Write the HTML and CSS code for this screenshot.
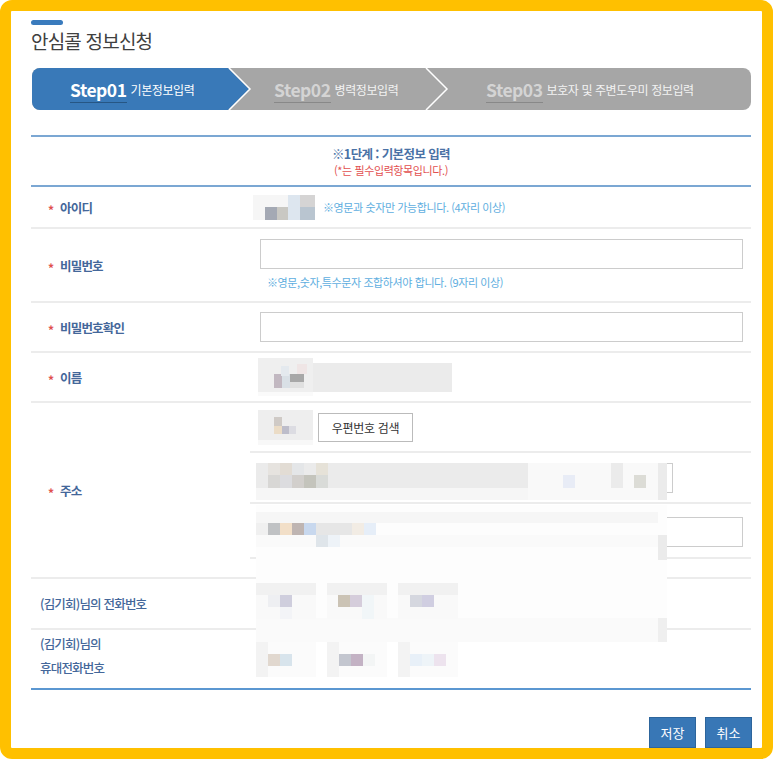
FILE: index.html
```html
<!DOCTYPE html>
<html lang="ko">
<head>
  <meta charset="UTF-8">
  <meta name="viewport" content="width=device-width, initial-scale=1.0">
  <title>안심콜 정보신청</title>
  <link rel="stylesheet" href="styles.css">
</head>
<body>
  <div class="frame">
    <div class="page-head">
      <span class="head-bar"></span>
      <h1 class="page-title">안심콜 정보신청</h1>
    </div>

    <div class="steps">
      <div class="step step-1 on">
        <span class="step-no">Step01</span><span class="step-name">기본정보입력</span>
      </div>
      <div class="step step-2">
        <span class="step-no">Step02</span><span class="step-name">병력정보입력</span>
      </div>
      <div class="step step-3">
        <span class="step-no">Step03</span><span class="step-name">보호자 및 주변도우미 정보입력</span>
      </div>
      <svg class="step-lines" width="719" height="42" viewBox="0 0 719 42">
        <polyline points="197,0 218,21 197,42"/>
        <polyline points="394,0 415,21 394,42"/>
      </svg>
    </div>

    <div class="form">
      <div class="form-head">
        <p class="form-step">※1단계 : 기본정보 입력</p>
        <p class="form-note">(*는 필수입력항목입니다.)</p>
      </div>

      <div class="row row-id">
        <div class="label"><span class="req">*</span>아이디</div>
        <div class="value">
          <div class="mz mz-id"></div>
          <span class="hint">※영문과 숫자만 가능합니다. (4자리 이상)</span>
        </div>
      </div>

      <div class="row row-pw">
        <div class="label"><span class="req">*</span>비밀번호</div>
        <div class="value value-stack">
          <input type="password" class="field">
          <span class="hint hint-under">※영문,숫자,특수문자 조합하셔야 합니다. (9자리 이상)</span>
        </div>
      </div>

      <div class="row row-pw2">
        <div class="label"><span class="req">*</span>비밀번호확인</div>
        <div class="value">
          <input type="password" class="field">
        </div>
      </div>

      <div class="row row-name">
        <div class="label"><span class="req">*</span>이름</div>
        <div class="value value-name">
          <div class="mz mz-name"></div>
          <span class="field-readonly"></span>
        </div>
      </div>

      <div class="row row-addr">
        <div class="label"><span class="req">*</span>주소</div>
        <div class="value addr">
          <div class="addr-line addr-zip">
            <div class="mz mz-zip"></div>
            <button type="button" class="btn-line">우편번호 검색</button>
          </div>
          <div class="addr-line addr-base">
            <input type="text" class="field field-mid">
            <div class="mz mz-addr"></div>
          </div>
          <div class="addr-line addr-detail">
            <input type="text" class="field">
          </div>
          <div class="addr-line addr-extra"></div>
        </div>
      </div>

      <div class="row row-tel">
        <div class="label label-plain">(김기회)님의 전화번호</div>
        <div class="value value-tel">
          <div class="mz mz-tel tel-1"></div>
          <div class="mz mz-tel tel-2"></div>
          <div class="mz mz-tel tel-3"></div>
        </div>
      </div>

      <div class="row row-mobile">
        <div class="label label-plain label-two">(김기회)님의<br>휴대전화번호</div>
        <div class="value value-tel">
          <div class="mz mz-tel mob-1"></div>
          <div class="mz mz-tel mob-2"></div>
          <div class="mz mz-tel mob-3"></div>
        </div>
      </div>

      <div class="blur-cover"></div>
    </div>

    <div class="actions">
      <button type="button" class="btn">저장</button>
      <button type="button" class="btn">취소</button>
    </div>
  </div>
</body>
</html>
```

FILE: styles.css
```css
* {
  margin: 0;
  padding: 0;
  box-sizing: border-box;
}

body {
  font-family: "Noto Sans CJK KR", "Noto Sans", sans-serif;
  background: #fff;
  color: #333;
}

.frame {
  width: 773px;
  height: 759px;
  border: 11px solid #ffc000;
  border-radius: 12px;
  background: #fff;
  padding: 0 11px 0 20px;
  overflow: hidden;
}

/* 제목 */
.page-head {
  padding-top: 9px;
}

.head-bar {
  display: block;
  width: 32px;
  height: 5px;
  border-radius: 3px;
  background: #3a7bbd;
}

.page-title {
  margin-top: 3px;
  font-size: 19px;
  line-height: 26px;
  font-weight: 400;
  letter-spacing: -0.8px;
  color: #404040;
}

/* 단계 표시 */
.steps {
  position: relative;
  display: flex;
  height: 42px;
  margin-top: 14px;
  margin-left: 1px;
  background: #a6a6a6;
  border-radius: 8px;
  overflow: hidden;
}

.step {
  display: flex;
  align-items: center;
  gap: 4px;
  height: 100%;
  color: #f2f2f2;
}

.step-1 {
  width: 217px;
  padding-left: 38px;
  background: #3979b8;
  clip-path: polygon(0 0, 196px 0, 217px 50%, 196px 100%, 0 100%);
  color: #fff;
}

.step-2 {
  width: 197px;
  padding-left: 25px;
}

.step-3 {
  flex: 1;
  padding-left: 40px;
}

.step-no {
  font-size: 17.5px;
  font-weight: 700;
  letter-spacing: -0.5px;
  line-height: 20px;
  color: #d4d4d4;
  border-bottom: 1px solid #888;
  padding-bottom: 2px;
  margin-top: 5px;
}

.on .step-no {
  color: #fff;
  border-bottom-color: #265684;
}

.step-name {
  font-size: 12px;
  letter-spacing: -0.4px;
  line-height: 16px;
  margin-top: 2px;
}

.step-lines {
  position: absolute;
  left: 0;
  top: 0;
}

.step-lines polyline {
  fill: none;
  stroke: #fff;
  stroke-width: 1.5;
}

/* 입력 폼 */
.form {
  position: relative;
  margin-top: 25px;
  border-top: 2px solid #7ba7d3;
  border-bottom: 2px solid #5b97d1;
}

.form-head {
  height: 50px;
  padding-top: 9px;
  text-align: center;
  border-bottom: 2px solid #7ba7d3;
}

.form-step {
  font-size: 12.5px;
  line-height: 16px;
  font-weight: 700;
  letter-spacing: -0.6px;
  color: #4a72a6;
}

.form-note {
  margin-top: 1px;
  font-size: 11px;
  line-height: 14px;
  letter-spacing: -0.4px;
  color: #e2504f;
}

.row {
  display: grid;
  grid-template-columns: 219px 1fr;
  border-bottom: 2px solid #ececec;
}

.row-id { height: 42px; }
.row-pw { height: 74px; }
.row-pw2 { height: 50px; }
.row-name { height: 50px; }
.row-addr { height: 176px; }
.row-tel { height: 51px; }
.row-mobile { height: 58px; border-bottom: none; }

.label {
  display: flex;
  align-items: center;
  padding-left: 9px;
  font-size: 12.5px;
  font-weight: 700;
  letter-spacing: -0.8px;
  color: #44679a;
}

.label-plain {
  font-weight: 500;
}

.label-two {
  line-height: 24px;
  padding-bottom: 6px;
}

.req {
  width: 12px;
  margin-left: 8px;
  color: #e0504f;
  font-size: 12px;
  position: relative;
  top: 2px;
}

.value {
  display: flex;
  align-items: center;
  padding-left: 10px;
}

.value-stack {
  flex-direction: column;
  align-items: flex-start;
  justify-content: flex-start;
  padding-top: 10px;
}

.hint {
  font-size: 11px;
  line-height: 15px;
  letter-spacing: -0.4px;
  color: #5eaee0;
}

.row-id .value {
  padding-left: 3px;
}

.row-id .hint {
  margin-left: 8px;
}

.hint-under {
  margin-top: 6px;
  padding-left: 7px;
}

.field {
  width: 483px;
  height: 30px;
  border: 1px solid #cccccc;
  background: #fff;
  outline: none;
}

.field-mid {
  width: 413px;
}

.value-name {
  padding-left: 8px;
}

.field-readonly {
  display: block;
  width: 139px;
  height: 29px;
  background: #ebebeb;
}

/* 주소 */
.addr {
  flex-direction: column;
  align-items: stretch;
  padding-left: 0;
}

.addr-line {
  position: relative;
  display: flex;
  align-items: center;
  padding-left: 10px;
  border-bottom: 2px solid #ececec;
}

.addr-zip {
  height: 50px;
  padding-left: 8px;
}

.addr-base { height: 51px; }

.addr-detail {
  height: 55px;
  align-items: flex-start;
  padding-top: 13px;
}

.addr-extra {
  height: 18px;
  border-bottom: none;
}

.btn-line {
  width: 95px;
  height: 29px;
  margin-left: 5px;
  border: 1px solid #bbbbbb;
  background: #fff;
  font-family: inherit;
  font-size: 12px;
  letter-spacing: -0.3px;
  color: #333;
}

/* 모자이크 처리 */
.mz {
  flex: none;
}

.mz-id {
  width: 62px;
  height: 25px;
  background:
    linear-gradient(#a4a9b4, #a4a9b4) 12px 12px / 12px 13px no-repeat,
    linear-gradient(#c9c8c3, #c9c8c3) 24px 12px / 11px 13px no-repeat,
    linear-gradient(#dde6ef, #dde6ef) 35px 0 / 12px 25px no-repeat,
    linear-gradient(#d5d4d4, #d5d4d4) 47px 0 / 15px 12px no-repeat,
    linear-gradient(#b9c5d0, #b9c5d0) 47px 12px / 15px 13px no-repeat,
    #f6f6f6;
}

.mz-name {
  width: 55px;
  height: 38px;
  background:
    linear-gradient(#e4e9ee, #e4e9ee) 23px 8px / 8px 10px no-repeat,
    linear-gradient(#efe5e5, #efe5e5) 39px 6px / 10px 10px no-repeat,
    linear-gradient(#c2b8c1, #c2b8c1) 16px 16px / 8px 14px no-repeat,
    linear-gradient(#d9e0e6, #d9e0e6) 24px 16px / 8px 14px no-repeat,
    linear-gradient(#a8a8a8, #a8a8a8) 31px 16px / 15px 8px no-repeat,
    linear-gradient(#e0e0e0, #e0e0e0) 31px 24px / 15px 6px no-repeat,
    linear-gradient(#fafafa, #fafafa) 0 34px / 100% 4px no-repeat,
    #efefef;
}

.mz-zip {
  width: 55px;
  height: 35px;
  background:
    linear-gradient(#cfcac6, #cfcac6) 16px 7px / 8px 9px no-repeat,
    linear-gradient(#ebdcc6, #ebdcc6) 16px 16px / 8px 8px no-repeat,
    linear-gradient(#bdbdca, #bdbdca) 24px 16px / 7px 8px no-repeat,
    linear-gradient(#dcdce2, #dcdce2) 31px 16px / 7px 8px no-repeat,
    linear-gradient(#f8f8f8, #f8f8f8) 0 30px / 100% 5px no-repeat,
    #eeeeee;
}

.mz-addr {
  position: absolute;
  left: 6px;
  top: 10px;
  width: 411px;
  height: 37px;
  background:
    linear-gradient(#e6e3df, #e6e3df) 12px 0 / 12px 12px no-repeat,
    linear-gradient(#e2dcd4, #e2dcd4) 24px 0 / 12px 12px no-repeat,
    linear-gradient(#e4e6e8, #e4e6e8) 36px 0 / 12px 12px no-repeat,
    linear-gradient(#e6e2d8, #e6e2d8) 60px 0 / 12px 12px no-repeat,
    linear-gradient(#d8d7d5, #d8d7d5) 12px 12px / 12px 13px no-repeat,
    linear-gradient(#dcdcdf, #dcdcdf) 24px 12px / 12px 13px no-repeat,
    linear-gradient(#d2cfcc, #d2cfcc) 36px 12px / 12px 13px no-repeat,
    linear-gradient(#c4c4bc, #c4c4bc) 48px 12px / 12px 13px no-repeat,
    linear-gradient(#d9dbd8, #d9dbd8) 60px 12px / 12px 13px no-repeat,
    linear-gradient(#f6f6f6, #f6f6f6) 0 25px / 272px 12px no-repeat,
    linear-gradient(#e8ecf6, #e8ecf6) 307px 12px / 12px 13px no-repeat,
    linear-gradient(#ebebeb, #ebebeb) 355px 0 / 12px 25px no-repeat,
    linear-gradient(#dcdcd6, #dcdcd6) 378px 12px / 12px 13px no-repeat,
    linear-gradient(#ebebeb, #ebebeb) 402px 0 / 9px 37px no-repeat,
    linear-gradient(#f9f9f9, #f9f9f9) 272px 0 / 139px 37px no-repeat,
    #ebebeb;
}

.blur-cover {
  position: absolute;
  left: 225px;
  top: 368px;
  width: 411px;
  height: 137px;
  z-index: 1;
  background:
    linear-gradient(#f6f6f6, #f6f6f6) 0 7px / 402px 11px no-repeat,
    linear-gradient(#f0f0f0, #f0f0f0) 0 18px / 12px 12px no-repeat,
    linear-gradient(#c0c2c4, #c0c2c4) 12px 18px / 12px 12px no-repeat,
    linear-gradient(#f2dfc8, #f2dfc8) 24px 18px / 12px 12px no-repeat,
    linear-gradient(#bfb5b2, #bfb5b2) 36px 18px / 12px 12px no-repeat,
    linear-gradient(#c8d8ee, #c8d8ee) 48px 18px / 12px 12px no-repeat,
    linear-gradient(#e6e6e6, #e6e6e6) 60px 18px / 36px 12px no-repeat,
    linear-gradient(#f2ece4, #f2ece4) 96px 18px / 12px 12px no-repeat,
    linear-gradient(#e6eef8, #e6eef8) 108px 18px / 12px 12px no-repeat,
    linear-gradient(#dfe5ea, #dfe5ea) 60px 30px / 12px 12px no-repeat,
    linear-gradient(#eef3f8, #eef3f8) 72px 30px / 12px 12px no-repeat,
    linear-gradient(#fafafa, #fafafa) 0 30px / 402px 12px no-repeat,
    linear-gradient(#ebebeb, #ebebeb) 402px 30px / 9px 25px no-repeat,
    linear-gradient(#efefef, #efefef) 402px 113px / 9px 24px no-repeat,
    linear-gradient(#fafafa, #fafafa) 0 113px / 402px 24px no-repeat,
    #fdfdfd;
}

.value-tel {
  align-items: flex-start;
  gap: 11px;
  padding-left: 6px;
}

.row-tel .value-tel { padding-top: 4px; }
.row-mobile .value-tel { padding-top: 12px; }

.mz-tel {
  position: relative;
  z-index: 2;
  width: 60px;
  height: 36px;
}

.tel-1 {
  background:
    linear-gradient(#eeeff2, #eeeff2) 12px 12px / 12px 12px no-repeat,
    linear-gradient(#cfcedd, #cfcedd) 24px 12px / 12px 12px no-repeat,
    linear-gradient(#f3f4f7, #f3f4f7) 24px 24px / 12px 12px no-repeat,
    linear-gradient(#f1f1f1, #f1f1f1) 0 0 / 100% 12px no-repeat,
    #f9f9f9;
}

.tel-2 {
  background:
    linear-gradient(#cbc3b5, #cbc3b5) 11px 12px / 12px 12px no-repeat,
    linear-gradient(#d5cddb, #d5cddb) 23px 12px / 12px 12px no-repeat,
    linear-gradient(#f1f6f8, #f1f6f8) 35px 12px / 12px 24px no-repeat,
    linear-gradient(#f1f1f1, #f1f1f1) 0 0 / 100% 12px no-repeat,
    #f9f9f9;
}

.tel-3 {
  background:
    linear-gradient(#d5d7df, #d5d7df) 12px 12px / 12px 12px no-repeat,
    linear-gradient(#d0cee1, #d0cee1) 24px 12px / 12px 12px no-repeat,
    linear-gradient(#f1f1f1, #f1f1f1) 0 0 / 100% 12px no-repeat,
    #f9f9f9;
}

.mob-1 {
  height: 35px;
  background:
    linear-gradient(#e1d8cf, #e1d8cf) 12px 12px / 12px 12px no-repeat,
    linear-gradient(#d8e4ec, #d8e4ec) 24px 12px / 12px 12px no-repeat,
    linear-gradient(#f3f3f3, #f3f3f3) 0 0 / 12px 100% no-repeat,
    #fbfbfb;
}

.mob-2 {
  height: 35px;
  background:
    linear-gradient(#c3c6cf, #c3c6cf) 12px 12px / 12px 12px no-repeat,
    linear-gradient(#c3b2c4, #c3b2c4) 24px 12px / 12px 12px no-repeat,
    linear-gradient(#f3f5f5, #f3f5f5) 36px 12px / 12px 12px no-repeat,
    linear-gradient(#f3f3f3, #f3f3f3) 0 0 / 12px 100% no-repeat,
    #fbfbfb;
}

.mob-3 {
  height: 35px;
  background:
    linear-gradient(#e8f0f8, #e8f0f8) 12px 12px / 12px 12px no-repeat,
    linear-gradient(#eef4f8, #eef4f8) 24px 12px / 12px 12px no-repeat,
    linear-gradient(#ede3ee, #ede3ee) 36px 12px / 12px 12px no-repeat,
    linear-gradient(#f3f3f3, #f3f3f3) 0 0 / 12px 100% no-repeat,
    #fbfbfb;
}

/* 버튼 */
.actions {
  display: flex;
  justify-content: flex-end;
  gap: 9px;
  margin-top: 27px;
  margin-right: -1px;
}

.btn {
  width: 47px;
  height: 31px;
  border: 1px solid #2d659c;
  background: #3877b6;
  color: #fff;
  font-family: inherit;
  font-size: 13px;
}
```
